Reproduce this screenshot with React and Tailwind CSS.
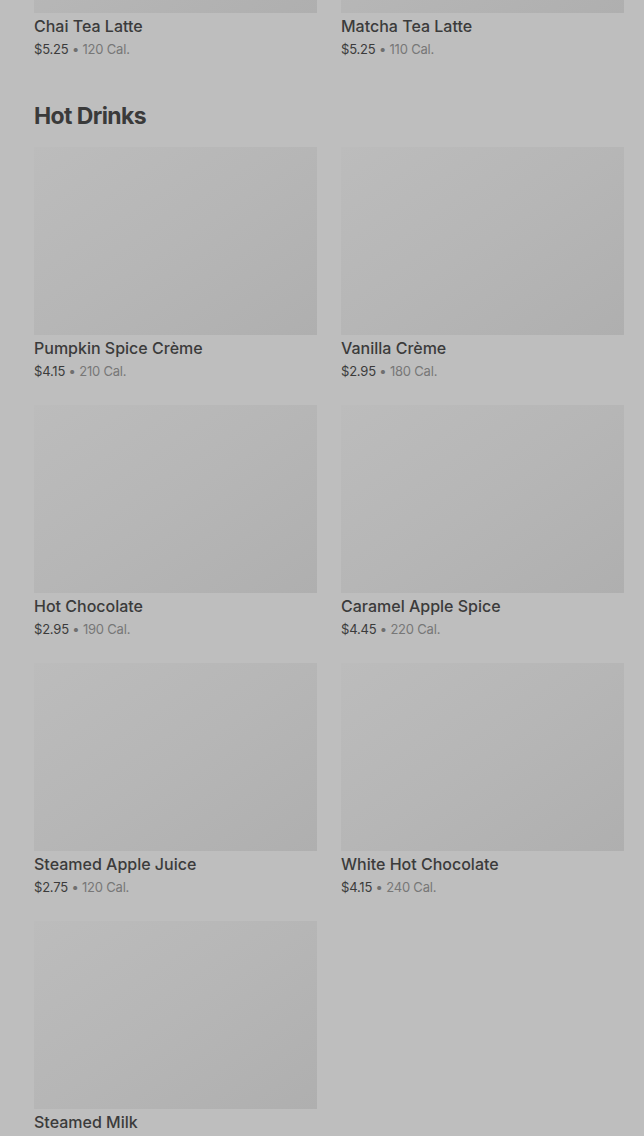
import React from "react";

const prev = [
  { name: "Chai Tea Latte", price: "$5.25", cal: "120 Cal." },
  { name: "Matcha Tea Latte", price: "$5.25", cal: "110 Cal." },
];

const hot = [
  { name: "Pumpkin Spice Crème", price: "$4.15", cal: "210 Cal." },
  { name: "Vanilla Crème", price: "$2.95", cal: "180 Cal." },
  { name: "Hot Chocolate", price: "$2.95", cal: "190 Cal." },
  { name: "Caramel Apple Spice", price: "$4.45", cal: "220 Cal." },
  { name: "Steamed Apple Juice", price: "$2.75", cal: "120 Cal." },
  { name: "White Hot Chocolate", price: "$4.15", cal: "240 Cal." },
  { name: "Steamed Milk", price: "$3.25", cal: "150 Cal." },
];

function Item({ item }) {
  return (
    <div className="flex flex-col">
      <div className="h-[188px] w-full bg-gradient-to-br from-[#bcbcbc] via-[#b6b6b6] to-[#afafaf]" />
      <div className="mt-[3px] text-[16px] leading-5 font-medium text-[#3b3b3b] tracking-[0px]">
        {item.name}
      </div>
      <div className="mt-[4px] text-[13px] leading-[18px] tracking-[-0.2px]">
        <span className="text-[#3b3b3b]">{item.price}</span>
        <span className="text-[#6f6f6f]"> • </span>
        <span className="text-[#777777]">{item.cal}</span>
      </div>
    </div>
  );
}

export default function App() {
  return (
    <div
      className="min-h-[1136px] w-[644px] overflow-hidden bg-[#bebebe]"
      style={{ fontFamily: "Inter, 'Liberation Sans', sans-serif" }}
    >
      <div className="-mt-[175px] pl-[34px] pr-[20px]">
        <div className="grid grid-cols-2 gap-x-[24px] gap-y-[25px]">
          {prev.map((it) => (
            <Item key={it.name} item={it} />
          ))}
        </div>
        <h2 className="mt-[42px] mb-[15px] text-[23px] leading-8 font-bold tracking-[-0.6px] text-[#3a3a3a]">
          Hot Drinks
        </h2>
        <div className="grid grid-cols-2 gap-x-[24px] gap-y-[25px]">
          {hot.map((it) => (
            <Item key={it.name} item={it} />
          ))}
        </div>
      </div>
    </div>
  );
}
